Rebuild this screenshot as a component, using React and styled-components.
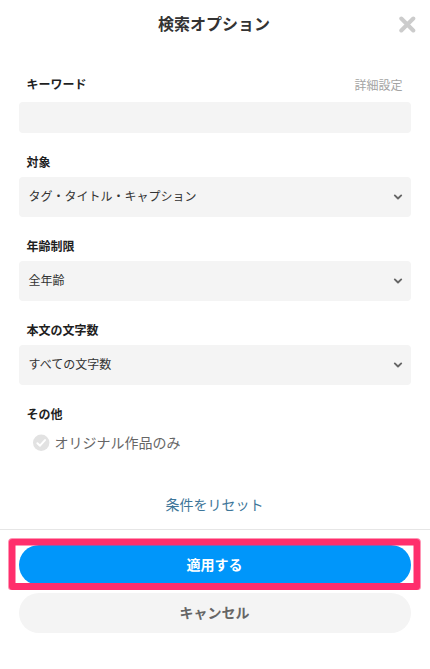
import React from "react";
import styled, { createGlobalStyle } from "styled-components";

const GlobalStyle = createGlobalStyle`
  *, *::before, *::after { box-sizing: border-box; }
  body {
    margin: 0;
    background: #fff;
    color: #333;
    font-family: "Noto Sans CJK JP", sans-serif;
  }
  button, input { font-family: inherit; }
`;

const Dialog = styled.main`
  display: flex;
  flex-direction: column;
  width: 430px;
  height: 669px;
  overflow: hidden;
  background: #fff;
`;

const Header = styled.header`
  display: grid;
  grid-template-columns: 32px 1fr 32px;
  align-items: center;
  height: 48px;
  padding: 0 7px 0 6px;
  flex: none;
`;

const Title = styled.h1`
  grid-column: 2;
  margin: 0;
  padding: 0 1px 2px 0;
  font-size: 16px;
  line-height: 24px;
  font-weight: 700;
  text-align: center;
  color: #333;
`;

const CloseButton = styled.button`
  display: flex;
  align-items: center;
  justify-content: center;
  width: 32px;
  height: 32px;
  padding: 0;
  border: 0;
  background: none;
  color: #ccc;
`;

const Form = styled.div`
  display: flex;
  flex-direction: column;
  gap: 20px;
  height: 481px;
  padding: 27px 19px 0;
  flex: none;
`;

const Field = styled.section`
  display: flex;
  flex-direction: column;
  gap: ${({ $gap }) => $gap || 6}px;
`;

const FieldHead = styled.div`
  display: flex;
  justify-content: space-between;
  padding: 0 8.5px 0 7.5px;
  height: 18px;
`;

const Label = styled.h2`
  margin: 0;
  font-size: 12px;
  line-height: 18px;
  font-weight: 700;
  color: #1f1f1f;
`;

const DetailLink = styled.a`
  font-size: 12px;
  line-height: 20px;
  color: #a3a3a3;
`;

const KeywordInput = styled.input`
  width: 100%;
  height: 31px;
  padding: 0 10px;
  border: 0;
  border-radius: 4px;
  background: #f4f4f4;
`;

const Select = styled.div`
  display: flex;
  align-items: center;
  justify-content: space-between;
  height: 40px;
  padding: 0 8px 2px 9.5px;
  border-radius: 4px;
  background: #f4f4f4;
  font-size: 12px;
  line-height: 18px;
  color: #333;
`;

const CheckRow = styled.div`
  display: flex;
  align-items: center;
  gap: 5px;
  height: 20px;
  padding-left: 13.5px;
  font-size: 14px;
  line-height: 20px;
  color: #666;
`;

const ResetLink = styled.a`
  align-self: center;
  margin-top: 20px;
  padding-right: 1px;
  font-size: 14px;
  line-height: 24px;
  color: #3d7699;
`;

const Footer = styled.footer`
  display: flex;
  flex-direction: column;
  gap: 8px;
  padding: 15px 19px 0;
  border-top: 1px solid #e6e6e6;
  flex: 1;
`;

const Highlight = styled.div`
  --edge: rgba(255, 46, 108, 0.5);
  position: relative;
  &::after {
    content: "";
    position: absolute;
    top: -6px;
    left: -10px;
    right: -9px;
    bottom: -5px;
    border: 6px solid #ff2e6c;
    border-bottom-width: 7px;
    border-radius: 3px;
    box-shadow:
      -1px 0 var(--edge), 1px 0 var(--edge), 0 -1px var(--edge),
      inset 1px 0 var(--edge), inset -1px 0 var(--edge), inset 0 1px var(--edge);
    pointer-events: none;
  }
`;

const Button = styled.button`
  display: block;
  width: 100%;
  height: 40px;
  padding: 0 1px 2px 0;
  border: 0;
  border-radius: 20px;
  font-size: 14px;
  line-height: 20px;
  font-weight: 700;
  color: ${({ $primary }) => ($primary ? "#fff" : "#666")};
  background: ${({ $primary }) => ($primary ? "#0096fa" : "#f4f4f4")};
`;

const CloseIcon = () => (
  <svg width="17" height="17" viewBox="0 0 17 17" fill="none" aria-hidden="true">
    <path d="M2.3 2.5l12 12M14.3 2.5l-12 12" stroke="currentColor" strokeWidth="4" strokeLinecap="round" />
  </svg>
);

const Chevron = () => (
  <svg width="10" height="10" viewBox="0 0 10 10" fill="none" aria-hidden="true">
    <path d="M1.8 4.4L5 7.5l3.2-3.1" stroke="#666" strokeWidth="1.9" strokeLinecap="round" strokeLinejoin="round" />
  </svg>
);

const CheckMark = () => (
  <svg width="17" height="17" viewBox="0 0 17 17" fill="none" aria-hidden="true">
    <circle cx="8.2" cy="8.7" r="8.2" fill="#e2e2e2" />
    <path d="M4.4 9.2l2.6 2.5 5-5.6" stroke="#fff" strokeWidth="2" strokeLinecap="round" strokeLinejoin="round" />
  </svg>
);

const SELECTS = [
  { label: "対象", value: "タグ・タイトル・キャプション" },
  { label: "年齢制限", value: "全年齢" },
  { label: "本文の文字数", value: "すべての文字数" },
];

export default function App() {
  return (
    <>
      <GlobalStyle />
      <Dialog>
        <Header>
          <Title>検索オプション</Title>
          <CloseButton aria-label="閉じる">
            <CloseIcon />
          </CloseButton>
        </Header>
        <Form>
          <Field $gap={9}>
            <FieldHead>
              <Label>キーワード</Label>
              <DetailLink>詳細設定</DetailLink>
            </FieldHead>
            <KeywordInput type="text" aria-label="キーワード" />
          </Field>
          {SELECTS.map(({ label, value }) => (
            <Field key={label}>
              <FieldHead>
                <Label>{label}</Label>
              </FieldHead>
              <Select>
                <span>{value}</span>
                <Chevron />
              </Select>
            </Field>
          ))}
          <Field $gap={9}>
            <FieldHead>
              <Label>その他</Label>
            </FieldHead>
            <CheckRow>
              <CheckMark />
              オリジナル作品のみ
            </CheckRow>
          </Field>
          <ResetLink>条件をリセット</ResetLink>
        </Form>
        <Footer>
          <Highlight>
            <Button $primary>適用する</Button>
          </Highlight>
          <Button>キャンセル</Button>
        </Footer>
      </Dialog>
    </>
  );
}
